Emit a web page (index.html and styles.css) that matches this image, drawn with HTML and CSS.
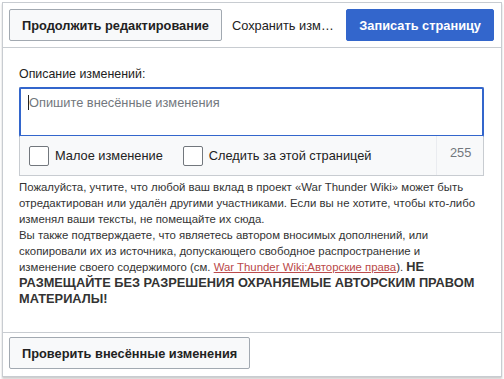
FILE: index.html
```html
<!DOCTYPE html>
<html lang="ru">
<head>
    <meta charset="UTF-8">
    <title>Сохранить изменения</title>
    <link rel="stylesheet" href="styles.css">
</head>
<body>
    <div class="dialog">
        <div class="dialog-head">
            <button class="btn">Продолжить редактирование</button>
            <div class="dialog-title">Сохранить изменения</div>
            <button class="btn btn-primary">Записать страницу</button>
        </div>

        <div class="dialog-body">
            <label class="summary-label">Описание изменений:</label>
            <div class="summary-box">
                <div class="summary-input"><span class="caret"></span>Опишите внесённые изменения</div>
                <div class="summary-options">
                    <label class="check"><span class="box"></span>Малое изменение</label>
                    <label class="check"><span class="box"></span>Следить за этой страницей</label>
                    <span class="count">255</span>
                </div>
            </div>
            <p class="license">
                Пожалуйста, учтите, что любой ваш вклад в проект «War Thunder Wiki» может быть отредактирован или удалён другими участниками. Если вы не хотите, чтобы кто-либо изменял ваши тексты, не помещайте их сюда.<br>
                Вы также подтверждаете, что являетесь автором вносимых дополнений, или скопировали их из источника, допускающего свободное распространение и<br>
                изменение своего содержимого (см. <a href="#">War Thunder Wiki:Авторские права</a>). <b>НЕ РАЗМЕЩАЙТЕ БЕЗ РАЗРЕШЕНИЯ ОХРАНЯЕМЫЕ АВТОРСКИМ ПРАВОМ МАТЕРИАЛЫ!</b>
            </p>
        </div>

        <div class="dialog-foot">
            <button class="btn">Проверить внесённые изменения</button>
        </div>
    </div>
</body>
</html>
```

FILE: styles.css
```css
body {
    margin: 0;
    background: #fff;
    font-family: "Liberation Sans", Arial, sans-serif;
    color: #222;
}

/* Dialog frame */
.dialog {
    margin: 2px;
    width: 498px;
    height: 373px;
    border: 1px solid #c8ccd1;
    box-shadow: 0 2px 2px rgba(0, 0, 0, 0.2);
    display: flex;
    flex-direction: column;
}

/* Header */
.dialog-head {
    display: flex;
    align-items: center;
    height: 44px;
    padding: 0 7px 0 6px;
    border-bottom: 1px solid #c8ccd1;
}

.dialog-title {
    flex: 1;
    min-width: 0;
    padding: 0 10px;
    font-size: 12.8px;
    white-space: nowrap;
    overflow: hidden;
    text-overflow: ellipsis;
}

.btn {
    height: 32px;
    padding: 0 12px;
    font-family: inherit;
    font-size: 12.8px;
    font-weight: bold;
    color: #222;
    background: #f8f9fa;
    border: 1px solid #a2a9b1;
    border-radius: 2px;
    white-space: nowrap;
}

.btn-primary {
    color: #fff;
    background: #36c;
    border-color: #36c;
}

/* Body */
.dialog-body {
    flex: 1;
    padding: 19px 17px 0 16px;
}

.summary-label {
    display: block;
    font-size: 12.4px;
    margin-bottom: 6px;
}

.summary-box {
    border: 1px solid #c8ccd1;
}

.summary-input {
    padding: 6px 8px;
    margin: -1px;
    border: 2px solid #36c;
    border-radius: 2px;
    font-size: 12.8px;
    color: #72777d;
    box-sizing: border-box;
    height: 50px;
}

.caret {
    display: inline-block;
    width: 1px;
    height: 15px;
    background: #222;
    vertical-align: -3px;
    margin-left: -1px;
}

.summary-options {
    display: flex;
    align-items: center;
    height: 39px;
    background: #f8f9fa;
    font-size: 12.8px;
}

.check {
    display: flex;
    align-items: center;
    gap: 6px;
    margin-left: 9px;
    margin-right: 11px;
}

.box {
    width: 18px;
    height: 18px;
    border: 1px solid #72777d;
    border-radius: 2px;
    background: #fff;
}

.count {
    margin-left: auto;
    align-self: stretch;
    display: flex;
    align-items: center;
    width: 47px;
    padding-left: 13px;
    box-sizing: border-box;
    border-left: 1px solid #eaecf0;
    color: #72777d;
    padding-bottom: 6px;
}

.license {
    margin: 3px 0 0;
    font-size: 11.4px;
    line-height: 16px;
    color: #333;
}

.license a {
    color: #ba4a4a;
}

.license b {
    font-size: 12.8px;
    color: #333;
}

/* Footer */
.dialog-foot {
    border-top: 1px solid #c8ccd1;
    padding: 4px 6px 7px;
}
```
